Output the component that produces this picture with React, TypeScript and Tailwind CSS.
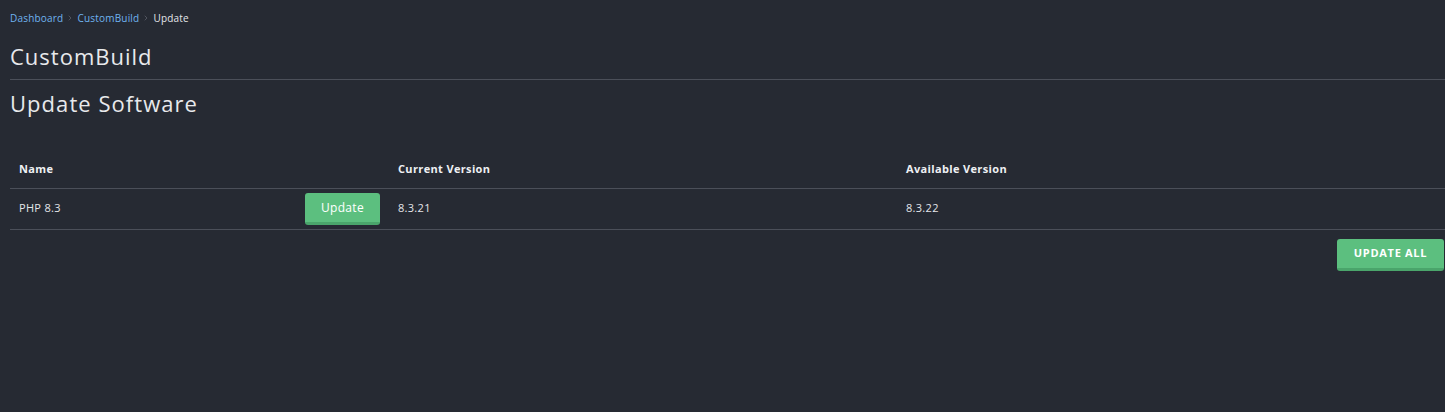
import React from "react";
import { ChevronRight } from "lucide-react";

const rows = [{ name: "PHP 8.3", current: "8.3.21", available: "8.3.22" }];

export default function App() {
  return (
    <div className="min-h-[412px] w-full bg-[#262a33] text-[#e4e6ea] font-['Open_Sans',sans-serif]">
      <div className="px-[10px] pt-[11px]">
        <nav className="flex items-center gap-[3px] text-[10px] leading-[14px] tracking-[0.2px]">
          <span className="text-[#6fb3f0]">Dashboard</span>
          <ChevronRight size={8} strokeWidth={1.5} className="text-[#7a7f8a]" />
          <span className="text-[#6fb3f0]">CustomBuild</span>
          <ChevronRight size={8} strokeWidth={1.5} className="text-[#7a7f8a]" />
          <span className="text-[#e4e6ea]">Update</span>
        </nav>

        <h1 className="mt-[18px] text-[22px] leading-[26px] tracking-[1px] text-[#e8e9ec]">CustomBuild</h1>
        <div className="mt-[10px] border-t border-[#4b4f59] -mr-[10px]" />
        <h2 className="mt-[10px] text-[22px] leading-[26px] tracking-[1.05px] text-[#e8e9ec]">Update Software</h2>

        <table className="mt-[34px] w-[calc(100%+10px)] border-collapse text-[11px]">
          <thead>
            <tr className="border-b border-[#4b4f59]">
              <th className="w-[379px] px-[9px] h-[38px] text-left font-bold tracking-[0.35px] text-[#eef0f3]">Name</th>
              <th className="w-[508px] px-[9px] text-left font-bold tracking-[0.35px] text-[#eef0f3]">Current Version</th>
              <th className="px-[9px] text-left font-bold tracking-[0.35px] text-[#eef0f3]">Available Version</th>
            </tr>
          </thead>
          <tbody>
            {rows.map((r) => (
              <tr key={r.name} className="border-b border-[#4b4f59]">
                <td className="px-[9px] h-[41px]">
                  <div className="flex items-center justify-between">
                    <span className="tracking-[0.3px]">{r.name}</span>
                    <button className="h-[32px] w-[75px] pt-[2px] rounded-[3px] bg-[#5cbf7f] border-b-[3px] border-[#4aa56b] text-[12px] tracking-[0.3px] text-white">
                      Update
                    </button>
                  </div>
                </td>
                <td className="px-[9px] tracking-[0.3px]">{r.current}</td>
                <td className="px-[9px] tracking-[0.3px]">{r.available}</td>
              </tr>
            ))}
          </tbody>
        </table>

        <div className="flex justify-end -mr-[9px] mt-[9px]">
          <button className="h-[32px] w-[107px] pt-[1px] rounded-[3px] bg-[#5cbf7f] border-b-[3px] border-[#4aa56b] text-[11px] font-bold text-white tracking-[0.7px]">
            UPDATE ALL
          </button>
        </div>
      </div>
    </div>
  );
}
